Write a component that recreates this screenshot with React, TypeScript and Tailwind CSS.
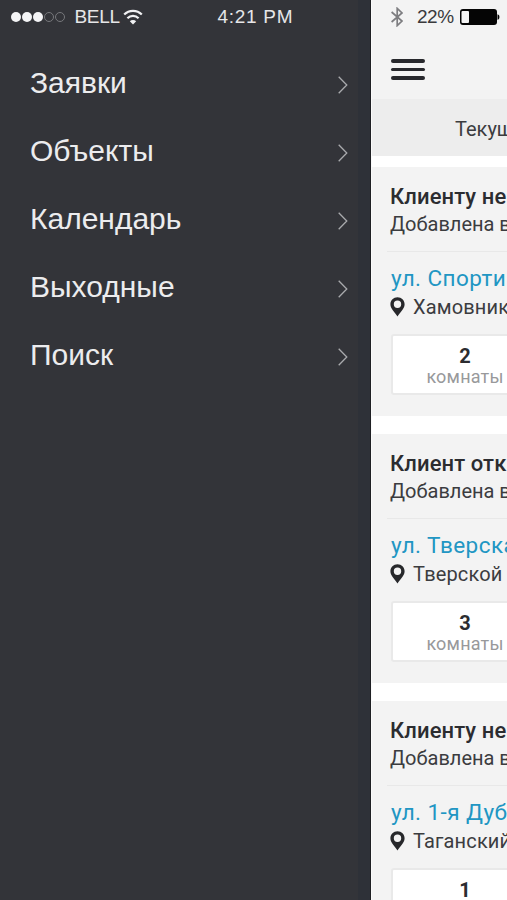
import type { ReactNode } from "react";

type Request = {
  id: number;
  title: string;
  added: string;
  street: string;
  district: string;
  rooms: number;
  roomsLabel: string;
};

const menuItems = ["Заявки", "Объекты", "Календарь", "Выходные", "Поиск"];

const requests: Request[] = [
  {
    id: 1,
    title: "Клиенту не",
    added: "Добавлена в",
    street: "ул. Спортивная",
    district: "Хамовники",
    rooms: 2,
    roomsLabel: "комнаты",
  },
  {
    id: 2,
    title: "Клиент отк",
    added: "Добавлена в",
    street: "ул. Тверская",
    district: "Тверской",
    rooms: 3,
    roomsLabel: "комнаты",
  },
  {
    id: 3,
    title: "Клиенту не",
    added: "Добавлена в",
    street: "ул. 1-я Дуб",
    district: "Таганский",
    rooms: 1,
    roomsLabel: "комната",
  },
];

function WifiIcon() {
  return (
    <svg width="20" height="16" viewBox="0 0 20 16" fill="none">
      <path d="M1.2 5.6a12.4 12.4 0 0 1 17.6 0" stroke="#f1f1f3" strokeWidth="2.2" />
      <path d="M4.4 9.2a7.9 7.9 0 0 1 11.2 0" stroke="#f1f1f3" strokeWidth="2.2" />
      <path d="M10 15.4 6.8 12.2a4.6 4.6 0 0 1 6.4 0Z" fill="#f1f1f3" />
    </svg>
  );
}

function BluetoothIcon() {
  return (
    <svg width="12" height="20" viewBox="0 0 12 20" fill="none">
      <path
        d="M0.6 5 11 14 6.2 18.6V1.4L11 6 0.6 15"
        stroke="#7d7d80"
        strokeWidth="1.7"
      />
    </svg>
  );
}

function BatteryIcon() {
  return (
    <svg width="40" height="16" viewBox="0 0 40 16">
      <rect x="0" y="0" width="37" height="16" rx="3" fill="#050505" />
      <rect x="1.5" y="2" width="7.5" height="12" rx="1" fill="#f5f5f5" />
      <path d="M37.5 5.2c1.4.3 1.9 1.5 1.9 2.8s-.5 2.5-1.9 2.8Z" fill="#050505" />
    </svg>
  );
}

function PinIcon() {
  return (
    <svg width="15" height="20" viewBox="0 0 15 20" className="shrink-0">
      <path
        fill="#27282b"
        fillRule="evenodd"
        d="M7.5.3C3.5.3.4 3.4.4 7.3c0 4.6 4.6 7.9 7.1 12.2 2.5-4.3 7.1-7.6 7.1-12.2C14.6 3.4 11.5.3 7.5.3Zm0 3.3a3.7 3.7 0 1 1 0 7.4 3.7 3.7 0 0 1 0-7.4Z"
      />
    </svg>
  );
}

function ChevronIcon() {
  return (
    <svg width="10" height="18" viewBox="0 0 10 18" fill="none">
      <path d="M.7.7 8.8 9 .7 17.3" stroke="#a9aaad" strokeWidth="1.3" />
    </svg>
  );
}

function Line({ className, children }: { className: string; children: ReactNode }) {
  return <div className={`whitespace-nowrap ${className}`}>{children}</div>;
}

function RequestCard({ request }: { request: Request }) {
  return (
    <article className="h-[249px] shrink-0 bg-[#f3f3f3] pl-[19px] pt-4">
      <Line className="-ml-px text-[22px] leading-7 font-medium tracking-[0.1px] text-[#2b2c30]">
        {request.title}
      </Line>
      <Line className="-ml-px text-[20px] leading-[27px] text-[#3b3c3f]">{request.added}</Line>
      <div className="mt-[13px] -ml-1 border-t border-[#e8e8e8]" />
      <Line className="mt-3 mb-px text-[22.5px] leading-7 tracking-[0.45px] text-[#2196c3]">
        {request.street}
      </Line>
      <div className="-ml-px flex items-center">
        <PinIcon />
        <Line className="ml-2 text-[20px] leading-7 tracking-[0.15px] text-[#3b3c3f]">
          {request.district}
        </Line>
      </div>
      <div className="mt-[13px] flex h-[61px] w-[148px] flex-col items-center rounded-[3px] border-2 border-[#e9e9e9] bg-white pt-2">
        <Line className="text-[20px] leading-6 font-bold text-[#2b2c30]">{request.rooms}</Line>
        <Line className="-mt-px text-[18px] leading-5 tracking-[0.2px] text-[#98999b]">
          {request.roomsLabel}
        </Line>
      </div>
    </article>
  );
}

function SideMenu() {
  return (
    <aside className="flex w-[371px] shrink-0 border-r border-[#1e1f23] bg-[#333439] font-['Liberation_Sans',sans-serif]">
      <div className="flex flex-1 flex-col">
        <div className="flex h-[34px] items-center pl-[11px] text-[19px] text-[#e6e6e8]">
          <div className="flex gap-[1.5px]">
            <span className="size-[9.5px] rounded-full bg-[#f4f4f6]" />
            <span className="size-[9.5px] rounded-full bg-[#f4f4f6]" />
            <span className="size-[9.5px] rounded-full bg-[#f4f4f6]" />
            <span className="size-[9.5px] rounded-full border border-[#77787c]" />
            <span className="size-[9.5px] rounded-full border border-[#77787c]" />
          </div>
          <span className="ml-[10px] w-12 tracking-[-0.3px]">BELL</span>
          <WifiIcon />
          <span className="ml-[75px] whitespace-nowrap tracking-[0.7px]">4:21 PM</span>
        </div>
        <nav className="mt-4">
          {menuItems.map((item) => (
            <a key={item} className="flex h-[68px] items-center justify-between pl-[30px] pr-[10px]">
              <span className="pb-[3px] text-[30px] text-[#ececee]">{item}</span>
              <span className="pt-0.5">
                <ChevronIcon />
              </span>
            </a>
          ))}
        </nav>
      </div>
      <div className="w-3 bg-[#2e3138]" />
    </aside>
  );
}

export default function App() {
  return (
    <div className="flex h-[900px] w-[507px] overflow-hidden bg-white">
      <SideMenu />
      <main className="flex min-w-0 flex-1 flex-col overflow-hidden border-l border-[#fafafa] font-[Roboto,sans-serif]">
        <header className="h-[99px] shrink-0 bg-[#f3f3f3] pl-[19px]">
          <div className="flex h-[34px] items-center">
            <BluetoothIcon />
            <span className="ml-[14px] w-[43px] font-['Liberation_Sans',sans-serif] text-[19px] tracking-[-0.5px] text-[#3a3a3c]">
              22%
            </span>
            <BatteryIcon />
          </div>
          <div className="mt-[25px] flex w-[34px] flex-col gap-[5px]">
            <span className="h-[3.5px] rounded-full bg-[#27282c]" />
            <span className="h-[3.5px] rounded-full bg-[#27282c]" />
            <span className="h-[3.5px] rounded-full bg-[#27282c]" />
          </div>
        </header>
        <div className="flex h-[57px] shrink-0 items-center bg-[#ededed] pl-[83px] text-[20px] text-[#3b3c3f]">
          <Line className="pt-0.5">Текущие</Line>
        </div>
        <div className="mt-[11px] flex flex-col gap-[18px]">
          {requests.map((request) => (
            <RequestCard key={request.id} request={request} />
          ))}
        </div>
      </main>
    </div>
  );
}
